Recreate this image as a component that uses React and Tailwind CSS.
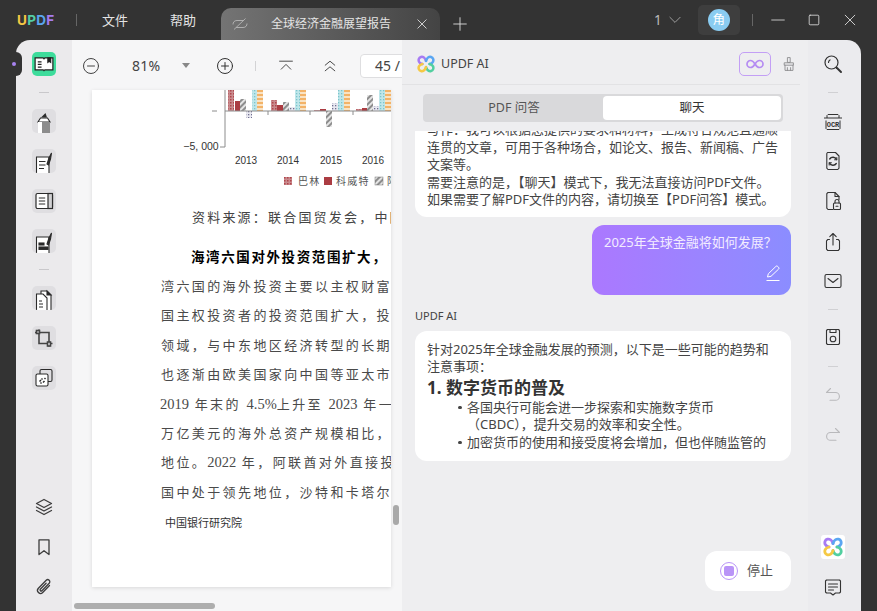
import React from 'react'

// shared stroke icon wrapper
function Ico({ size = 20, color = '#3c3c3c', sw = 1.3, children, className = '' }) {
  return (
    <svg width={size} height={size} viewBox="0 0 20 20" fill="none" stroke={color} strokeWidth={sw} strokeLinecap="round" strokeLinejoin="round" className={'shrink-0 ' + className}>
      {children}
    </svg>
  )
}

function AiLogo({ size = 18 }) {
  return (
    <svg width={size} height={size} viewBox="0 0 20 20" fill="none" strokeWidth="2.8" strokeLinecap="round" className="shrink-0">
      <path d="M10 6.5C9 3 6.5 1.6 4.4 2.2 2 2.9 1.3 5.4 2.2 7.4 2.8 8.8 4.2 9.6 6 10" stroke="#a77bf3" />
      <path d="M10 6.5C11 3 13.5 1.6 15.6 2.2 18 2.9 18.7 5.4 17.8 7.4 17.2 8.8 15.8 9.6 14 10" stroke="#5aa6f2" />
      <path d="M14 10C15.8 10.4 17.2 11.2 17.8 12.6 18.7 14.6 18 17.1 15.6 17.8 13.5 18.4 11 17 10 13.5" stroke="#52cfa0" />
      <path d="M10 13.5C9 17 6.5 18.4 4.4 17.8 2 17.1 1.3 14.6 2.2 12.6 2.8 11.2 4.2 10.4 6 10" stroke="#f5c945" />
    </svg>
  )
}

function RailBtn({ children }) {
  return <div className="w-6 h-6 rounded-[5px] bg-[#dfdee1] flex items-center justify-center overflow-hidden">{children}</div>
}

function LeftRail() {
  return (
    <div className="w-14 shrink-0 bg-[#ebeaec] flex flex-col items-center pt-3 pb-[14px]">
      <div className="w-6 h-6 rounded-[5px] bg-[#3ddc9b] flex items-center justify-center">
        <svg width="20" height="18" viewBox="0 0 18 16" fill="#fff" stroke="#222" strokeWidth="1.1">
          <path d="M1 2.500h7.200L9 3.400l.8-.9H17v10.800H9.800L9 14l-.8-.7H1z" />
          <path d="M3.400 6h3.400M3.400 8.400h3.400M3.400 10.800h3.400" fill="none" />
          <path d="M12.500 2.500h2.500v4l-1.250-1-1.250 1z" fill="#222" />
        </svg>
      </div>
      <div className="w-[10px] h-px bg-[#c9c8cb] mt-4" />
      <div className="mt-4 flex flex-col gap-4">
        <RailBtn>
          <svg width="18" height="22" viewBox="0 0 18 22" className="mt-1">
            <path d="M10.500 1 6 5.500h6z" fill="#2b2b2b" />
            <path d="M5.500 6h7l2.500 4H3z" fill="#fff" stroke="#2b2b2b" strokeWidth="1.100" />
            <rect x="3" y="10" width="12" height="12" fill="#8c8c8c" />
            <rect x="3" y="10" width="4" height="12" fill="#fff" />
          </svg>
        </RailBtn>
        <RailBtn>
          <svg width="20" height="22" viewBox="0 0 20 22" className="mt-1" stroke="#2b2b2b" strokeWidth="1.100" fill="none">
            <path d="M2.500 5H15v17H2.500z" fill="#fff" />
            <path d="M5 9.500h6.500M5 13h6.500M5 16.500h5" />
            <path d="M17.500 1l-1 6-2 6-1.500-1 2-6z" fill="#2b2b2b" />
          </svg>
        </RailBtn>
        <RailBtn>
          <svg width="20" height="20" viewBox="0 0 20 20" stroke="#2b2b2b" strokeWidth="1.200">
            <rect x="2" y="2.500" width="16.500" height="15" rx="1.500" fill="#fff" />
            <rect x="14" y="2.500" width="4.500" height="15" fill="#d0d0d2" />
            <path d="M4.800 7h6.400M4.800 10h6.400M4.800 13h6.400" fill="none" />
          </svg>
        </RailBtn>
        <RailBtn>
          <svg width="20" height="22" viewBox="0 0 20 22" className="mt-1" stroke="#2b2b2b" strokeWidth="1.100" fill="none">
            <path d="M2.500 5H15v17H2.500z" fill="#fff" />
            <rect x="5" y="11" width="5" height="2" fill="#2b2b2b" />
            <rect x="5" y="15" width="9" height="2.400" fill="#2b2b2b" />
            <path d="M17.500 1l-1 6-2 6-1.500-1 2-6z" fill="#2b2b2b" />
          </svg>
        </RailBtn>
      </div>
      <div className="w-[10px] h-px bg-[#c9c8cb] mt-4" />
      <div className="mt-4 flex flex-col gap-4">
        <RailBtn>
          <svg width="20" height="22" viewBox="0 0 20 22" className="mt-1" stroke="#2b2b2b" strokeWidth="1.100" fill="#fff">
            <path d="M7 2h6l4 4v16H7z" />
            <path d="M13 2v4h4z" fill="#2b2b2b" />
            <path d="M2.500 5H9l4 4v13H2.500z" />
            <path d="M5 12h3M5 15h4M5 18h4" fill="none" />
          </svg>
        </RailBtn>
        <RailBtn>
          <svg width="20" height="20" viewBox="0 0 20 20" fill="none" stroke="#444" strokeWidth="1.600">
            <path d="M5 1.500v14h13.500" />
            <path d="M1 4.500h14v14" />
            <rect x="2.500" y="2.500" width="3" height="3" fill="#dfdee1" />
            <rect x="13.500" y="14" width="3" height="4" fill="#dfdee1" />
          </svg>
        </RailBtn>
        <RailBtn>
          <svg width="20" height="20" viewBox="0 0 20 20" fill="none" stroke="#2b2b2b" strokeWidth="1.100">
            <rect x="6" y="1.500" width="12" height="12" rx="1.500" />
            <rect x="2" y="6" width="12" height="12" rx="1.500" fill="#fff" />
            <path d="M5.500 13.500l1.500-1.500M7.500 11.500l1-1M9 14.500l1.500-1.500M6.500 15.500l1-1M10.500 11l1-1" strokeWidth="1.500" />
          </svg>
        </RailBtn>
      </div>
      <div className="mt-auto flex flex-col items-center gap-5">
        <Ico>
          <path d="M10 2.500l7.500 4-7.500 4-7.500-4z" />
          <path d="M2.500 10l7.500 4 7.500-4M2.500 13.500l7.500 4 7.500-4" />
        </Ico>
        <Ico>
          <path d="M5 2.800h10v14.700l-5-3.800-5 3.800z" />
        </Ico>
        <Ico>
          <path d="M15.500 8.500l-6.800 7a3 3 0 0 1-4.300-4.200l7.800-8a2.100 2.100 0 0 1 3 3l-7.300 7.400a1.100 1.100 0 0 1-1.600-1.500l5.800-6" />
        </Ico>
      </div>
    </div>
  )
}

function Hatch() {
  return (
    <defs>
      <pattern id="pink" width="3" height="3" patternUnits="userSpaceOnUse">
        <rect width="3" height="3" fill="#c98a8d" />
        <rect width="1.500" height="1.500" fill="#b0454b" />
      </pattern>
      <pattern id="hatch" width="4" height="4" patternUnits="userSpaceOnUse" patternTransform="rotate(45)">
        <rect width="4" height="4" fill="#e4e4e4" />
        <rect width="2" height="4" fill="#8d8d8d" />
      </pattern>
      <pattern id="dots" width="3" height="3" patternUnits="userSpaceOnUse">
        <rect width="3" height="3" fill="#e8e8f0" />
        <rect width="1.300" height="1.300" fill="#6f6f90" />
      </pattern>
      <pattern id="teal" width="3" height="3" patternUnits="userSpaceOnUse">
        <rect width="3" height="3" fill="#bfe6ea" />
        <rect width="1.300" height="1.300" fill="#7cc5cc" />
      </pattern>
      <pattern id="orange" width="6" height="4" patternUnits="userSpaceOnUse">
        <rect width="6" height="4" fill="#f9e3c4" />
        <rect width="6" height="2" fill="#f3b368" />
      </pattern>
    </defs>
  )
}

// bars as [x, top, bottom, fill] in page coordinates, baseline y = 21
const bars = [
  [136, 0, 21, 'url(#pink)'], [143, 11, 21, '#ab3c42'], [148, 9, 21, 'url(#hatch)'], [154, 21, 28, 'url(#dots)'], [160, 0, 21, 'url(#teal)'], [165, 0, 21, 'url(#orange)'],
  [179, 10, 21, 'url(#pink)'], [185, 15, 21, '#ab3c42'], [191, 12, 21, 'url(#hatch)'], [197, 17, 21, 'url(#dots)'], [203, 0, 21, 'url(#teal)'], [208, 0, 21, 'url(#orange)'],
  [222, 20, 21, 'url(#pink)'], [228, 19, 21, '#ab3c42'], [234, 21, 37, 'url(#hatch)'], [240, 13, 21, 'url(#dots)'], [246, 0, 21, 'url(#teal)'], [252, 0, 21, 'url(#orange)'],
  [264, 19, 21, 'url(#pink)'], [270, 18, 21, '#ab3c42'], [275, 5, 21, 'url(#hatch)'], [281, 16, 21, 'url(#dots)'], [287, 0, 21, 'url(#teal)'], [293, 0, 21, 'url(#orange)'],
]

function Chart() {
  return (
    <svg width="299" height="105" viewBox="0 0 299 105" className="block">
      <Hatch />
      {bars.map(([x, t, b, f], i) => <rect key={i} x={x} y={t} width="6" height={b - t} fill={f} />)}
      <path d="M133 0v57M128 57h5M120 21h5M133 21h166M176 21v4M218 21v4M261 21v4" stroke="#8c8c8c" strokeWidth="1" fill="none" />
      <g fontFamily="'Liberation Sans',sans-serif" fontSize="10" fill="#333" textAnchor="middle">
        <text x="109" y="60" fontSize="10.500">−5, 000</text>
        <text x="154" y="74">2013</text>
        <text x="196" y="74">2014</text>
        <text x="239" y="74">2015</text>
        <text x="281" y="74">2016</text>
      </g>
      <rect x="192" y="87" width="8" height="8" fill="url(#pink)" />
      <rect x="232" y="87" width="8" height="8" fill="#ab3c42" />
      <rect x="283" y="87" width="8" height="8" fill="url(#hatch)" stroke="#777" strokeWidth="0.500" />
      <g fontFamily="'Noto Sans CJK SC',sans-serif" fontSize="10" fill="#555" letterSpacing="1.2">
        <text x="206" y="95">巴林</text>
        <text x="244" y="95">科威特</text>
        <text x="295" y="95">阿</text>
      </g>
    </svg>
  )
}

// latin figures sit tight in the pdf, only the CJK is spaced out
function Num({ children }) {
  return <span className="text-[14.500px] tracking-normal">{children}</span>
}

function PdfPage() {
  return (
    <div className="w-[299px] h-[497px] bg-white shadow-[0_1px_4px_rgba(0,0,0,0.12)] overflow-hidden font-['Liberation_Serif','Noto_Sans_CJK_SC',serif] whitespace-nowrap">
      <Chart />
      <div className="mt-[13px] ml-[100px] h-5 leading-5 text-[13px] tracking-[2.200px] text-[#444]">资料来源：联合国贸发会，中国银行</div>
      <div className="mt-5 ml-[99px] h-5 leading-5 text-[13.500px] tracking-[1.600px] font-bold text-black">海湾六国对外投资范围扩大，</div>
      <div className="mt-1 ml-[69px] text-[13px] leading-[29.400px] tracking-[2.400px] text-[#4a4a4a]">
        <div>湾六国的海外投资主要以主权财富基金为主</div>
        <div>国主权投资者的投资范围扩大，投资</div>
        <div>领域，与中东地区经济转型的长期目标</div>
        <div>也逐渐由欧美国家向中国等亚太市场</div>
        <div className="-ml-px"><Num>2019</Num> 年末的 <Num>4.5%</Num>上升至 <Num>2023</Num> 年一季度</div>
        <div>万亿美元的海外总资产规模相比，其</div>
        <div>地位。<Num>2022</Num> 年，阿联酋对外直接投资</div>
        <div>国中处于领先地位，沙特和卡塔尔</div>
      </div>
      <div className="mt-2 ml-[73px] h-4 leading-4 text-[11px] text-[#333]">中国银行研究院</div>
    </div>
  )
}

function Viewer() {
  return (
    <div className="w-[330px] shrink-0 bg-[#f6f6f7] flex flex-col relative overflow-hidden">
      <div className="h-[50px] pt-px flex items-center shrink-0 text-[#444]">
        <Ico size={20} color="#444" sw={1} className="ml-[9px]"><circle cx="10" cy="10" r="7.500" /><path d="M6.500 10h7" /></Ico>
        <span className="ml-[31px] w-[30px] shrink-0 text-[14px] tracking-[0.3px]">81%</span>
        <span className="ml-[20px] w-0 h-0 shrink-0 border-x-[4px] border-x-transparent border-t-[5px] border-t-[#888]" />
        <Ico size={20} color="#333" sw={1} className="ml-[25px]"><circle cx="10" cy="10" r="7.500" /><path d="M6.500 10h7M10 6.500v7" /></Ico>
        <span className="ml-[20px] w-px h-[10px] shrink-0 bg-[#d3d3d5]" />
        <Ico size={16} color="#333" sw={1.100} className="ml-[22px]"><path d="M2 4h16M4 14l6-6 6 6" /></Ico>
        <Ico size={16} color="#333" sw={1.100} className="ml-[28px]"><path d="M4 9l6-5 6 5M4 16l6-5 6 5" /></Ico>
        <div className="ml-[22px] w-[60px] shrink-0 h-6 bg-white border border-[#dedee0] rounded-[4px] pl-[14px] text-[14px] leading-[22px] whitespace-nowrap">45 /</div>
      </div>
      <div className="flex-1 pl-5">
        <PdfPage />
      </div>
      <div className="absolute left-[321px] top-[465px] w-[6px] h-5 rounded-full bg-[#a9a9a9]" />
      <div className="absolute left-[2px] top-[563px] w-[141px] h-[6px] rounded-full bg-[#aeaeae]" />
    </div>
  )
}

function Bullet({ children }) {
  return (
    <div className="flex">
      <span className="w-[3.500px] h-[3.500px] mt-[7px] -ml-[9px] mr-[5.500px] rounded-full bg-[#444] shrink-0" />
      <div>{children}</div>
    </div>
  )
}

function AiPanel() {
  return (
    <div className="flex-1 min-w-0 bg-[#eeeef0] flex flex-col relative">
      <div className="h-[45px] shrink-0 mr-2 border-b border-[#e2e2e4] flex items-center pl-[15px] pt-1">
        <AiLogo />
        <span className="ml-[6px] text-[12.500px] text-[#444]">UPDF AI</span>
        <div className="ml-[250px] w-8 h-6 rounded-[5px] border border-[#c39ff5] flex items-center justify-center">
          <svg width="18" height="10" viewBox="0 0 18 10" fill="none" stroke="#b58cf2" strokeWidth="1.700">
            <path d="M9 5C7.500 2.500 6 1.500 4.500 1.500a3.500 3.500 0 0 0 0 7C6 8.500 7.500 7.500 9 5c1.500-2.500 3-3.500 4.500-3.500a3.500 3.500 0 0 1 0 7C12 8.500 10.500 7.500 9 5z" />
          </svg>
        </div>
        <Ico size={16} color="#8a8a8c" sw={1.100} className="ml-[10px]">
          <path d="M8.500 2h3v6h-3zM4.500 8.500h11v3h-11zM5 11.500v6.500h10v-6.500M8 14.500V18M12 14.500V18" />
        </Ico>
      </div>
      <div className="h-[46px] shrink-0 flex items-center pl-[21px]">
        <div className="w-[360px] h-7 bg-[#d9d9db] rounded-[4px] flex items-center p-[2px] text-[12.500px]">
          <div className="flex-1 text-center text-[#555]">PDF 问答</div>
          <div className="w-[178px] h-6 bg-white rounded-[4px] leading-6 text-center text-[#333]">聊天</div>
        </div>
      </div>
      <div className="flex-1 overflow-hidden pl-[13px] pr-[17px] text-[13px] leading-[17.500px] text-[#444]">
        <div className="-mt-[10px] bg-white rounded-xl px-3 pb-2 whitespace-nowrap">
          <div>写作：我可以根据您提供的要求和材料，生成符合规范且通顺</div>
          <div>连贯的文章，可用于各种场合，如论文、报告、新闻稿、广告</div>
          <div>文案等。</div>
          <div>需要注意的是，【聊天】模式下，我无法直接访问PDF文件。</div>
          <div>如果需要了解PDF文件的内容，请切换至【PDF问答】模式。</div>
        </div>
        <div className="mt-2 ml-auto w-[199px] h-[70px] rounded-xl bg-gradient-to-r from-[#ab78ff] to-[#8b8dff] pl-3 pr-[10px] pt-[9px] flex flex-col text-[#f3ecff] whitespace-nowrap">
          <div>2025年全球金融将如何发展？</div>
          <svg width="16" height="17" viewBox="0 0 16 17" fill="none" stroke="#fff" strokeWidth="1" className="ml-auto mt-[14px]">
            <path d="M2.500 12l.8-3.200L10.800 1.500a1.300 1.300 0 0 1 2 0l.7.7a1.300 1.300 0 0 1 0 2L6 11.300zM1.500 15.500h13" />
          </svg>
        </div>
        <div className="mt-[13px] text-[11px] leading-[15px] text-[#444]">UPDF AI</div>
        <div className="mt-2 h-[130px] bg-white rounded-xl px-3 pt-[10px] whitespace-nowrap">
          <div>针对2025年全球金融发展的预测，以下是一些可能的趋势和</div>
          <div>注意事项：</div>
          <div className="text-[17px] leading-[23px] font-bold text-[#333]">1. 数字货币的普及</div>
          <div className="pl-10">
            <Bullet>各国央行可能会进一步探索和实施数字货币<br />（CBDC），提升交易的效率和安全性。</Bullet>
            <Bullet>加密货币的使用和接受度将会增加，但也伴随监管的</Bullet>
          </div>
        </div>
      </div>
      <div className="absolute left-[303px] top-[511px] w-[86px] h-10 bg-white rounded-xl flex items-center pl-[15px] text-[13px] text-[#555]">
        <span className="w-[18px] h-[18px] rounded-full border border-[#b994f7] flex items-center justify-center">
          <span className="w-[10px] h-[10px] rounded-[2px] bg-[#b994f7]" />
        </span>
        <span className="ml-[9px]">停止</span>
      </div>
    </div>
  )
}

function RightRail() {
  const c = '#333'
  return (
    <div className="w-[53px] shrink-0 bg-[#ebebee] flex flex-col items-center pt-[14px] pb-[14px] pr-[3px]">
      <Ico color={c} sw={1.200}><circle cx="8.500" cy="8.500" r="6.500" /><path d="M13.500 13.500l4.500 4.500" strokeWidth="2" /><path d="M5.500 8.500a3 3 0 0 1 1.500-2.600" /></Ico>
      <div className="w-[10px] h-px bg-[#d0d0d3] mt-[18px]" />
      <svg width="20" height="20" viewBox="0 0 20 20" fill="none" stroke={c} strokeWidth="1" className="mt-[18px]">
        <path d="M1 7h18M4 7V4.500l1-1h10l1 1V7M3 9.500v8l1 1h12l1-1v-8" />
        <text x="10" y="16" textAnchor="middle" fontSize="7" fontFamily="'Liberation Mono',monospace" fontWeight="bold" fill={c} stroke="none">OCR</text>
      </svg>
      <Ico color={c} sw={1.100} className="mt-[20px]">
        <path d="M4.500 1.500h8l3.500 3.500v12.200l-1.200 1.300H5l-1.200-1.300V2.500z" />
        <path d="M13.500 8.500A3.900 3.900 0 0 0 6.700 8M6.500 12a3.900 3.900 0 0 0 6.800.5" strokeWidth="1.400" />
        <path d="M13.800 6.500v2.300h-2.200M6.200 14v-2.300h2.200" strokeWidth="1.100" />
      </Ico>
      <Ico color={c} sw={1.100} className="mt-[20px]">
        <path d="M10 18.500H5l-1.200-1.300V2.700L5 1.500h7l4 4v3" />
        <path d="M12 1.500v4h4" />
        <rect x="10.500" y="12" width="7" height="6.500" rx="1" />
        <path d="M12 12V10.500a2 2 0 0 1 4 0V12M13 15.200h2" />
      </Ico>
      <Ico color={c} sw={1.100} className="mt-[21px]">
        <path d="M6.500 7.500H4.800L3.500 8.800v8.400l1.300 1.300h10.400l1.300-1.300V8.800L15.200 7.500h-1.700M10 13V1.500M6.800 4.700L10 1.500l3.200 3.200" />
      </Ico>
      <Ico color={c} sw={1.100} className="mt-[19px]">
        <rect x="2" y="3.500" width="16" height="13" rx="1.500" />
        <path d="M5 7.500l5 4 5-4" />
      </Ico>
      <div className="w-[10px] h-px bg-[#d0d0d3] mt-[18px]" />
      <Ico color={c} sw={1.100} className="mt-[17px]">
        <path d="M4.500 2.500h11l1 1v13l-1 1h-11l-1-1v-13z" />
        <path d="M7 2.500v3h6v-3" />
        <circle cx="10" cy="12" r="2.800" />
      </Ico>
      <div className="w-[10px] h-px bg-[#d0d0d3] mt-[19px]" />
      <Ico color="#b9b9bc" sw={1.100} className="mt-[18px]">
        <path d="M7.500 3.500L3.500 7.500h9a3.800 3.800 0 0 1 0 7.800H7" />
      </Ico>
      <Ico color="#b9b9bc" sw={1.100} className="mt-[20px]">
        <path d="M12.500 3.500l4 4h-9a3.800 3.800 0 0 0 0 7.800H13" />
      </Ico>
      <div className="mt-auto flex flex-col items-center">
        <div className="w-6 h-6 rounded-[3px] bg-white flex items-center justify-center">
          <AiLogo size={20} />
        </div>
        <Ico color={c} sw={1.100} className="mt-[18px]">
          <path d="M3.500 3h13l1 1v11l-1 1h-4L10 18l-2.500-2h-4l-1-1V4z" />
          <path d="M5.500 7h9M5.500 10h9M5.500 13h5" />
        </Ico>
      </div>
    </div>
  )
}

function TopBar() {
  return (
    <div className="h-10 shrink-0 flex text-[#e4e4e4]">
      <div className="pt-[10px] pl-[17px] w-[76px] text-[13.500px] leading-5 font-bold tracking-[0.3px] font-['Inter',sans-serif]">
        <span className="text-[#f3c744]">U</span><span className="text-[#54cda4]">P</span><span className="text-[#5aa5ee]">D</span><span className="text-[#a57cf0]">F</span>
      </div>
      <div className="mt-[14px] w-px h-3 bg-[#666]" />
      <div className="pl-[25px] pt-[10px] w-[93px] text-[13px] leading-5">文件</div>
      <div className="pt-[10px] w-[51px] text-[13px] leading-5">帮助</div>
      <div className="mt-2 w-[219px] h-8 rounded-t-[10px] bg-gradient-to-r from-[#747474] to-[#444] flex items-center pl-[11px]">
        <svg width="16" height="14" viewBox="0 0 16 14" fill="none" stroke="#b0b0b0" strokeWidth="1">
          <path d="M1 7.500c0-2 1-4 4-4h7M15 6.500c0 2-1 4-4 4H4M2 12.500L13.500 1.500" />
        </svg>
        <span className="ml-[23px] w-[121px] text-[12px] whitespace-nowrap">全球经济金融展望报告</span>
        <Ico size={12} color="#ddd" sw={1.500} className="ml-[24px]"><path d="M3 3l14 14M17 3L3 17" /></Ico>
      </div>
      <Ico size={14} color="#ddd" sw={1.300} className="mt-[17px] ml-[13px]"><path d="M10 1v18M1 10h18" /></Ico>
      <span className="ml-[187px] pt-[10px] text-[13.500px] leading-5 text-[#bbb]">1</span>
      <Ico size={12} color="#bbb" sw={1.300} className="mt-[14px] ml-[7px]"><path d="M1.500 5.500L10 14l8.500-8.500" /></Ico>
      <div className="ml-[17px] mt-[5px] w-[42px] h-[30px] bg-[#3e3e3e] rounded-[5px] flex items-center justify-center">
        <div className="w-[22px] h-[22px] rounded-full bg-[#8accf1] text-white text-[12.500px] leading-[22px] text-center">角</div>
      </div>
      <div className="ml-3 mt-[14px] w-px h-3 bg-[#666]" />
      <Ico size={14} color="#ddd" sw={1.200} className="mt-[13px] ml-[18px]"><path d="M1 10h18" /></Ico>
      <Ico size={12} color="#ddd" sw={1.400} className="mt-[14px] ml-[23px]"><rect x="2" y="2" width="16" height="16" rx="1.500" /></Ico>
      <Ico size={12} color="#ddd" sw={1.500} className="mt-[14px] ml-[24px]"><path d="M2 2l16 16M18 2L2 18" /></Ico>
    </div>
  )
}

export default function App() {
  return (
    <div className="w-[877px] h-[611px] bg-[#333333] flex flex-col overflow-hidden relative font-['Noto_Sans','Noto_Sans_CJK_SC',sans-serif]">
      <TopBar />
      <div className="flex-1 min-h-0 flex mx-4 rounded-t-[14px] overflow-hidden">
        <LeftRail />
        <Viewer />
        <AiPanel />
        <RightRail />
      </div>
      {/* notch with the purple dot on the left rail */}
      <div className="absolute left-[10px] top-[52px] w-[12px] h-6 rounded-full bg-[#333333] flex items-center justify-start pl-[2px]">
        <span className="w-1 h-1 rounded-full bg-[#a883f0]" />
      </div>
    </div>
  )
}
